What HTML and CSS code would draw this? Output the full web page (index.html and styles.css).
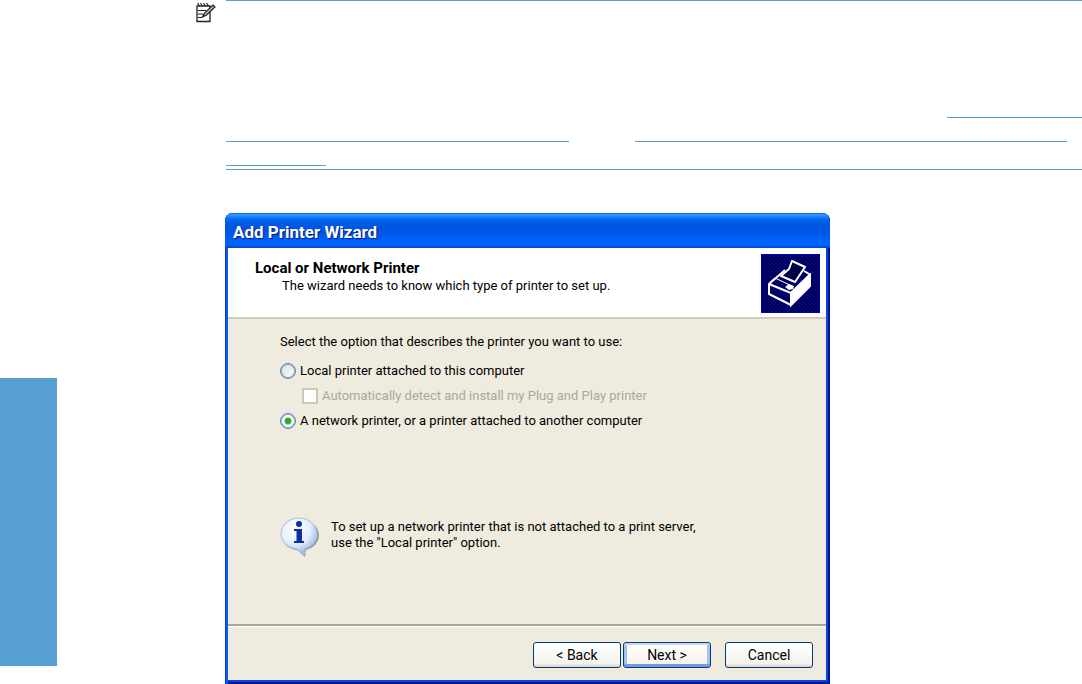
FILE: index.html
```html
<!DOCTYPE html>
<html lang="en">
<head>
<meta charset="utf-8">
<title>Add Printer Wizard</title>
<link rel="stylesheet" href="styles.css">
</head>
<body>
<div class="page">
  <aside class="margin">
    <div class="chapter-tab"></div>
    <svg class="note-icon" width="21" height="21" viewBox="0 0 21 21" aria-hidden="true">
      <path d="M2 4H15V19.500H2Z" fill="#fff" stroke="#222" stroke-width="1.300"/>
      <path d="M2.500 1L4.500 4M5.500 1L7.500 4M8.500 1L10.500 4M11.500 1L13.500 4" stroke="#222" stroke-width="1.200"/>
      <path d="M3 8.500H11M3 12H8M3 15.500H7" stroke="#222" stroke-width="1.200"/>
      <path d="M18 3L20 5L11.500 13L7.500 15L9.500 11Z" fill="#bbb" stroke="#222" stroke-width="1.200"/>
      <path d="M7.500 15L8.500 12.500L10 14Z" fill="#111"/>
    </svg>
  </aside>
  <main class="content">
    <section class="note">
      <div class="line line-end"><span class="rule rule-a"></span></div>
      <div class="line"><span class="rule rule-b"></span><span class="rule rule-c"></span></div>
      <div class="line"><span class="rule rule-d"></span></div>
    </section>
    <form class="window">
      <h1 class="titlebar">Add Printer Wizard</h1>
      <div class="client">
        <header class="banner">
          <div class="heading">
            <h2>Local or Network Printer</h2>
            <p>The wizard needs to know which type of printer to set up.</p>
          </div>
          <svg class="printer" width="59" height="59" viewBox="0 0 59 59" aria-hidden="true">
            <defs>
              <pattern id="weave" width="4" height="4" patternUnits="userSpaceOnUse">
                <path d="M0 0H4V4H0Z" fill="#00007c"/>
                <path d="M0 0H2V2H0ZM2 2H4V4H2Z" fill="#00003c"/>
                <path d="M2 0H3V1H2ZM0 2H1V3H0Z" fill="#0000d8"/>
              </pattern>
            </defs>
            <path d="M0 0H59V59H0Z" fill="url(#weave)"/>
            <path d="M.5 .5H58.500V58.500H.5Z" fill="none" stroke="#0000b8"/>
            <path d="M30 39L49 21V32L30 51Z" fill="#fff" stroke="#fff" stroke-width="2"/>
            <path d="M30 51L8 40V30L24 16M8 30L30 39V51M43 17L49 20.500L30 39" fill="none" stroke="#fff" stroke-width="2" stroke-linejoin="round"/>
            <path d="M31 7L44 13L34 28L20 22L28 15Z" fill="#000044" stroke="#fff" stroke-width="2" stroke-linejoin="round"/>
            <path d="M9 28L14 24L31 32" fill="none" stroke="#fff" stroke-width="1"/>
            <path d="M24 33L28 30L33 32L32 35L28 36Z" fill="#fff"/>
          </svg>
        </header>
        <div class="body">
          <fieldset class="options">
            <legend>Select the option that describes the printer you want to use:</legend>
            <label class="option"><input type="radio" name="printer" value="local">Local printer attached to this computer</label>
            <label class="option sub"><input type="checkbox" disabled>Automatically detect and install my Plug and Play printer</label>
            <label class="option"><input type="radio" name="printer" value="network" checked>A network printer, or a printer attached to another computer</label>
          </fieldset>
          <div class="info">
            <svg width="40" height="40" viewBox="0 0 40 40" aria-hidden="true">
              <defs>
                <radialGradient id="bubble" cx=".4" cy=".3" r=".75">
                  <stop offset="0" stop-color="#fff"/>
                  <stop offset=".55" stop-color="#e4effc"/>
                  <stop offset="1" stop-color="#82acdf"/>
                </radialGradient>
              </defs>
              <path d="M20 3C30 3 39 9 39 18C39 26 33 31 26 33L25 40L17 33C8 32 2 26 2 18C2 9 10 3 20 3Z" fill="#7d8797" opacity=".8"/>
              <path d="M19 1C29 1 37 8 37 17C37 25 31 30 25 31.500L24 38L17 32C8 31 1 25 1 17C1 8 9 1 19 1Z" fill="url(#bubble)" stroke="#a9bfdb"/>
              <circle cx="19" cy="7" r="3" fill="#0b2ea5"/>
              <path d="M14 12H22V24H24V26H14V24H16.500V14H14Z" fill="#0b2ea5"/>
            </svg>
            <p>To set up a network printer that is not attached to a print server,<br>use the "Local printer" option.</p>
          </div>
        </div>
        <footer class="actions">
          <button type="button">&lt; Back</button>
          <button type="button" class="default">Next &gt;</button>
          <button type="button" class="cancel">Cancel</button>
        </footer>
      </div>
    </form>
  </main>
</div>
</body>
</html>
```
FILE: styles.css
```css
* { box-sizing: border-box; }
body {
  margin: 0;
  background: #fff;
  color: #000;
  font: 13px/16px Roboto, "Liberation Sans", sans-serif;
}
h1, h2, p { margin: 0; }
.page { display: flex; }
.margin {
  flex: 0 0 225px;
  display: flex;
  justify-content: space-between;
  align-items: flex-start;
  padding-right: 9px;
}
.chapter-tab {
  width: 57px;
  height: 288px;
  margin-top: 378px;
  background: #589fd3;
}
.note-icon { margin-top: 2px; }
.content { flex: 1; min-width: 0; }

.note {
  margin-left: 1px;
  padding: 93px 0 3px;
  border-top: 1px solid #589fd3;
  border-bottom: 1px solid #589fd3;
}
.line { display: flex; align-items: flex-end; height: 24px; }
.line-end { justify-content: flex-end; }
.rule { height: 1px; background: #589fd3; }
.rule-a { width: 135px; }
.rule-b { width: 343px; margin-right: 66px; }
.rule-c { flex: 1; margin-right: 15px; }
.rule-d { width: 100px; }

.window {
  max-width: 605px;
  margin-top: 43px;
  padding: 0 4px 4px 3px;
  background: #0831d9;
  border-radius: 8px 8px 0 0;
  box-shadow: inset 1px 0 #0a35c8, inset 3px 0 #0a5cf0, inset -2px -2px #00138c, inset -4px -4px #0844e4;
  overflow: hidden;
}
.titlebar {
  height: 35px;
  margin: 0 -4px 0 -3px;
  padding: 0 8px;
  background: linear-gradient(#0058ee 0, #3593ff 4%, #288eff 8%, #0366f0 18%, #0058e0 35%, #0055e5 55%, #0061fc 80%, #0066ff 90%, #0044c8 100%);
  color: #fff;
  font: bold 17px/39px Roboto, "Liberation Sans", sans-serif;
  text-shadow: 1px 1px 1px #0a1883;
}
.client { background: #efebde; }
.banner {
  display: flex;
  justify-content: space-between;
  align-items: flex-start;
  height: 71px;
  padding: 6px 6px 0 27px;
  background: #fff;
  border-bottom: 2px solid #cfcbbe;
}
.heading { padding-top: 5px; }
.heading h2 { font-size: 15px; line-height: 18px; }
.heading p { padding-left: 27px; line-height: 18px; }
.body { height: 305px; padding: 15px 20px 0 52px; }
.options { margin: 0; padding: 0; border: 0; }
.options legend { padding: 0; margin-bottom: 12px; }
.option {
  display: flex;
  align-items: center;
  gap: 4px;
  height: 18px;
  margin-bottom: 7px;
}
.option input {
  appearance: none;
  flex: none;
  width: 16px;
  height: 16px;
  margin: 0;
  border: 2px solid #5784aa;
  background: linear-gradient(135deg, #dcdcd7, #fff);
}
.option input[type="radio"] { border-radius: 50%; border-width: 1px; box-shadow: 0 0 0 1px #9db4c8 inset; }
.option input[type="radio"]:checked { background: radial-gradient(circle, #21a121 0, #35b535 3px, #fff 4px); }
.sub { padding-left: 22px; color: #aca899; }
.option input[type="checkbox"] { border-color: #cac8bb; background: #fff; }
.info { display: flex; gap: 11px; margin-top: 80px; }
.info p { padding-top: 2px; }
.actions {
  display: flex;
  justify-content: flex-end;
  height: 56px;
  padding: 16px 13px 0;
  border-top: 2px solid #aaa69c;
  box-shadow: inset 0 1px #fff;
}
.actions button {
  width: 88px;
  height: 26px;
  margin-left: 2px;
  padding: 0;
  border: 1px solid #003c74;
  border-radius: 3px;
  background: linear-gradient(#fff, #f4f3ee 85%, #d9d3c8);
  color: #000;
  font: inherit;
  font-size: 14px;
}
.actions .default { box-shadow: inset 0 2px #c4d9fa, inset 0 -3px #7898e4, inset 3px 0 #a6c0f3, inset -3px 0 #a6c0f3; }
.actions .cancel { margin-left: 14px; }
```
